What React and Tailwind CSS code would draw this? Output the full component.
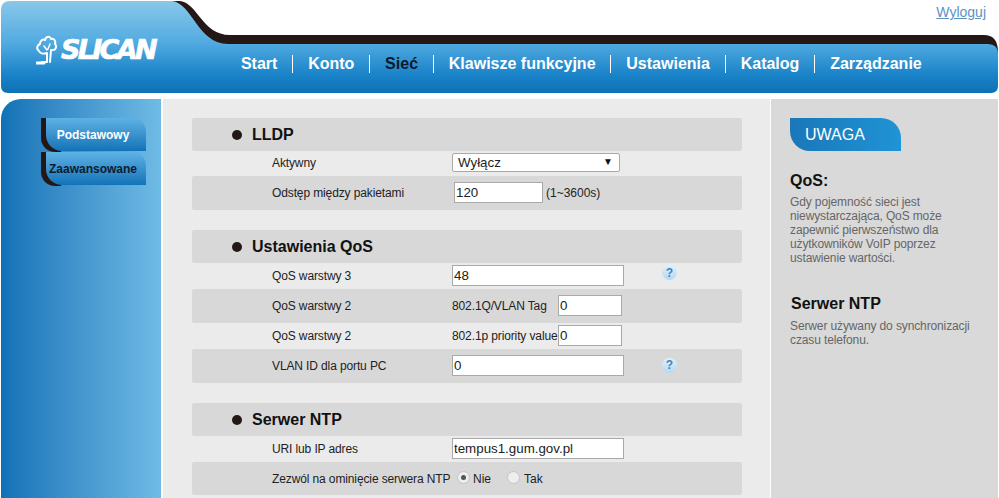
import React from 'react';

const navItems = ['Start', 'Konto', 'Sieć', 'Klawisze funkcyjne', 'Ustawienia', 'Katalog', 'Zarządzanie'];

const HeaderShape = () => (
  <svg className="absolute inset-0" width="999" height="94" viewBox="0 0 999 94">
    <defs>
      <linearGradient id="headerBlue" x1="0" y1="0" x2="0" y2="1">
        <stop offset="0" stopColor="#8ac7e9" />
        <stop offset="0.45" stopColor="#52abe1" />
        <stop offset="0.8" stopColor="#1a83c9" />
        <stop offset="1" stopColor="#0e70b4" />
      </linearGradient>
    </defs>
    <path d="M172 1 L180 1 C198 3 202 35 230 35 L984 35 Q997 35 998 50 L998 60 L200 60 Z" fill="#231815" />
    <path d="M1 10 Q1 1 10 1 L172 1 C192 3 198 44 228 44 L988 44 Q998 44 998 54 L998 86 Q998 93 991 93 L8 93 Q1 93 1 86 Z" fill="url(#headerBlue)" />
  </svg>
);

const TreeLogo = () => (
  <svg width="22" height="30" viewBox="0 0 22 30" fill="none" stroke="#fff" strokeWidth="2" strokeLinejoin="round" strokeLinecap="round">
    <path d="M6 27 L11 27 L11 18 C8 19 4 19 3 16 C0 14 1 10 4 9 C4 5 7 4 9 5 C10 1 14 1 15 4 C18 3 20 6 19 9 C21 11 20 15 17 15 L15 15 L14 27" />
    <path d="M1 28 L8 28" strokeWidth="3" />
    <path d="M8 11 L11 15 M14 9 L12 14" strokeWidth="1.5" />
  </svg>
);

const HelpIcon = ({ className }) => (
  <span className={`ml-[38px] flex h-[15px] w-[15px] items-center justify-center rounded-full bg-gradient-to-b from-[#e2f0f9] to-[#b5d8ef] text-[12px] leading-none font-bold text-[#3b86c6] ${className}`}>?</span>
);

const Radio = ({ checked }) => (
  <span className="flex h-[13px] w-[13px] items-center justify-center rounded-full border border-[#c4c4c4] bg-[#eeeeee]">
    {checked && <span className="h-[5px] w-[5px] rounded-full bg-[#555]" />}
  </span>
);

const Section = ({ title, children }) => (
  <section className="mb-5">
    <div className="flex h-[33px] items-center rounded-[2px] bg-[#d8d8d9] pl-10">
      <span className="mr-[10px] h-[10px] w-[10px] rounded-full bg-[#231815]" />
      <h2 className="text-base font-bold text-[#111]">{title}</h2>
    </div>
    {children}
  </section>
);

const Row = ({ label, shaded, height = 'h-[26px]', children }) => (
  <div className={`flex items-center pl-20 text-xs text-[#222] ${height} ${shaded ? 'rounded-[2px] bg-[#d8d8d9]' : ''}`}>
    <span className="w-[180px] tracking-[-0.12px] whitespace-nowrap">{label}</span>
    {children}
  </div>
);

const Field = ({ value, className }) => (
  <input
    readOnly
    defaultValue={value}
    className={`-mt-[1px] h-[21px] border border-[#a9a9a9] bg-white px-[1px] text-[13.33px] text-[#222] outline-none ${className}`}
  />
);

const SideTab = ({ label, active }) => (
  <div className="h-[34px] w-[105px] rounded-bl-[14px] bg-[linear-gradient(90deg,#231815_20px,transparent_20px)]">
    <div className={`ml-[5px] flex h-[33px] items-center justify-center rounded-tr-[14px] rounded-bl-[16px] bg-gradient-to-b from-[#5db2e4] to-[#0f73b7] pr-[6px] text-xs font-bold whitespace-nowrap ${active ? 'text-white' : 'text-[#0b1c30]'}`}>
      {label}
    </div>
  </div>
);

export default function App() {
  return (
    <div className="h-[498px] w-[999px] overflow-hidden bg-white font-['Liberation_Sans',Arial,sans-serif]">
      <header className="relative h-[94px]">
        <HeaderShape />
        <a href="#" className="absolute top-[2px] right-[13px] text-sm text-[#5d92c4] underline">Wyloguj</a>
        <div className="relative flex h-full items-start">
          <div className="mt-[35px] ml-[36px] flex w-[190px] items-center">
            <TreeLogo />
            <span className="ml-[3px] font-['DejaVu_Sans',sans-serif] text-[27px] leading-[30px] font-black tracking-[-2.7px] text-white italic [-webkit-text-stroke:0.7px_white]">SLICAN</span>
          </div>
          <nav className="mt-[55px] flex items-center">
            {navItems.map((item, i) => (
              <a
                key={item}
                href="#"
                className={`h-[18px] px-[14.9px] text-base leading-[18px] font-bold whitespace-nowrap ${i > 0 ? 'border-l border-white' : ''} ${item === 'Sieć' ? 'text-[#0b1a2c]' : 'text-white'}`}
              >
                {item}
              </a>
            ))}
          </nav>
        </div>
      </header>

      <div className="mt-[5px] flex h-[399px] pl-px">
        <aside className="w-40 rounded-tl-[20px] bg-gradient-to-r from-[#0f72b6] to-[#6fbbe6] pt-[19px] pl-10">
          <SideTab label="Podstawowy" active />
          <SideTab label="Zaawansowane" />
        </aside>

        <main className="ml-[2px] w-[607px] bg-[#ebebeb] pt-[19px] pl-[29px]">
          <div className="w-[550px]">
            <Section title="LLDP">
              <Row label="Aktywny" height="h-[25px] pb-[2px]">
                <div className="relative">
                  <select className="h-[19px] w-[168px] appearance-none rounded-[2px] border border-[#a9a9a9] bg-white pl-[5px] text-[13.33px] text-[#222] outline-none">
                    <option>Wyłącz</option>
                  </select>
                  <span className="pointer-events-none absolute top-[4px] right-[7px] text-[10px] leading-[10px] text-[#111]">▼</span>
                </div>
              </Row>
              <Row label="Odstęp między pakietami" shaded height="h-[34px]">
                <Field value="120" className="ml-[2px] w-[89px]" />
                <span className="ml-[3px]">(1~3600s)</span>
              </Row>
            </Section>

            <Section title="Ustawienia QoS">
              <Row label="QoS warstwy 3">
                <Field value="48" className="w-[172px]" />
                <HelpIcon className="-mt-[7px]" />
              </Row>
              <Row label="QoS warstwy 2" shaded height="h-[34px]">
                <span className="w-[106px] tracking-[-0.12px]">802.1Q/VLAN Tag</span>
                <Field value="0" className="w-[64px]" />
              </Row>
              <Row label="QoS warstwy 2">
                <span className="w-[106px] tracking-[-0.12px] whitespace-nowrap">802.1p priority value</span>
                <Field value="0" className="w-[64px]" />
              </Row>
              <Row label="VLAN ID dla portu PC" shaded height="h-[34px]">
                <Field value="0" className="w-[172px]" />
                <HelpIcon className="-mt-[2px]" />
              </Row>
            </Section>

            <Section title="Serwer NTP">
              <Row label="URI lub IP adres">
                <Field value="tempus1.gum.gov.pl" className="w-[172px]" />
              </Row>
              <Row label="Zezwól na ominięcie serwera NTP" shaded height="h-[33px]">
                <span className="ml-[5px] flex items-center">
                  <span className="-mt-[2px]"><Radio checked /></span>
                  <span className="ml-[3px]">Nie</span>
                  <span className="-mt-[2px] ml-[16px]"><Radio /></span>
                  <span className="ml-[4px]">Tak</span>
                </span>
              </Row>
            </Section>
          </div>
        </main>

        <aside className="ml-px w-[227px] bg-[#d9d9d9] pt-[19px] pl-[19px] text-xs leading-[14px] tracking-[-0.12px] text-[#666]">
          <div className="flex h-[33px] w-[111px] items-center rounded-tr-[20px] rounded-bl-[20px] bg-gradient-to-r from-[#1a77b8] to-[#1f94d6] pl-[15px] text-base tracking-normal text-white">
            UWAGA
          </div>
          <h3 className="mt-[21px] text-base leading-[18px] font-bold tracking-normal text-[#111]">QoS:</h3>
          <p className="mt-[5px]">
            Gdy pojemność sieci jest<br />
            niewystarczająca, QoS może<br />
            zapewnić pierwszeństwo dla<br />
            użytkowników VoIP poprzez<br />
            ustawienie wartości.
          </p>
          <h3 className="mt-[30px] pl-px text-base leading-[18px] font-bold tracking-normal text-[#111]">Serwer NTP</h3>
          <p className="mt-[6px]">
            Serwer używany do synchronizacji<br />
            czasu telefonu.
          </p>
        </aside>
      </div>
    </div>
  );
}
